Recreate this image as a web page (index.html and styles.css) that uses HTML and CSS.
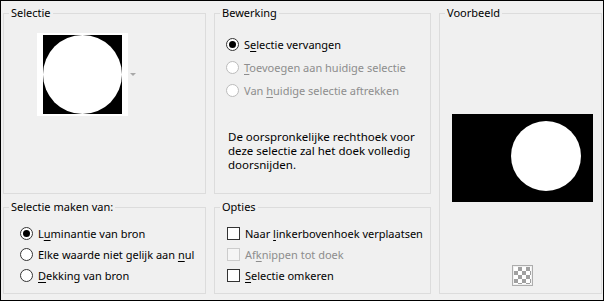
FILE: index.html
```html
<!DOCTYPE html>
<html>
<head>
    <link rel="stylesheet" href="styles.css">
</head>
<body>
    <div class="dialog">
        <!-- Source thumbnail -->
        <fieldset class="group selection">
            <legend>Selectie</legend>
            <div class="thumb-row">
                <div class="thumb">
                    <div class="thumb-img"><div class="disc"></div></div>
                </div>
                <span class="drop-arrow"></span>
            </div>
        </fieldset>

        <!-- Operation -->
        <fieldset class="group operation">
            <legend>Bewerking</legend>
            <div class="option-list">
                <label class="option"><span class="radio checked"></span><span>S<u>e</u>lectie vervangen</span></label>
                <label class="option disabled"><span class="radio"></span><span><u>T</u>oevoegen aan huidige selectie</span></label>
                <label class="option disabled"><span class="radio"></span><span>Van <u>h</u>uidige selectie aftrekken</span></label>
            </div>
            <p class="note">De oorspronkelijke rechthoek voor<br>deze selectie zal het doek volledig<br>doorsnijden.</p>
        </fieldset>

        <!-- Preview -->
        <fieldset class="group preview">
            <legend>Voorbeeld</legend>
            <div class="preview-img"><div class="preview-disc"></div></div>
            <div class="checker"><div class="checker-inner"></div></div>
        </fieldset>

        <!-- Source channel -->
        <fieldset class="group source">
            <legend>Selectie maken van:</legend>
            <div class="option-list tight">
                <label class="option"><span class="radio checked"></span><span>L<u>u</u>minantie van bron</span></label>
                <label class="option"><span class="radio"></span><span>Elke waarde niet gelijk aan <u>n</u>ul</span></label>
                <label class="option"><span class="radio"></span><span><u>D</u>ekking van bron</span></label>
            </div>
        </fieldset>

        <!-- Options -->
        <fieldset class="group options">
            <legend>Opties</legend>
            <div class="option-list tight">
                <label class="option"><span class="check"></span><span>Naar <u>l</u>inkerbovenhoek verplaatsen</span></label>
                <label class="option disabled"><span class="check"></span><span>Af<u>k</u>nippen tot doek</span></label>
                <label class="option"><span class="check"></span><span><u>S</u>electie omkeren</span></label>
            </div>
        </fieldset>
    </div>
</body>
</html>
```

FILE: styles.css
```css
/* Dialog frame */
body {
    margin: 0;
    font-family: "Noto Sans", sans-serif;
    font-size: 11px;
    color: #000;
    background: #f0f0f0;
}
.dialog {
    box-sizing: border-box;
    width: 604px;
    height: 301px;
    border: 1px solid #000;
    background: #f0f0f0;
    padding: 4px 1px 6px 2px;
    display: grid;
    grid-template-columns: 203px 217px 163px;
    grid-template-rows: 189px 95px;
    column-gap: 8px;
    row-gap: 5px;
}
.group {
    margin: 0;
    padding: 0;
    min-width: 0;
    border: 1px solid #dcdcdc;
}
.group legend {
    margin-left: 5px;
    padding: 0 2px;
    line-height: 16px;
}
.preview {
    grid-column: 3;
    grid-row: 1 / span 2;
}
.source {
    grid-column: 1;
    grid-row: 2;
}
.options {
    grid-column: 2;
    grid-row: 2;
}

/* Selectie thumbnail */
.thumb-row {
    display: flex;
    align-items: center;
    margin: 12px 0 0 33px;
}
.thumb {
    background: #fff;
    padding: 2px 6px;
}
.thumb-img {
    width: 79px;
    height: 79px;
    background: #000;
}
.disc {
    width: 79px;
    height: 79px;
    border-radius: 50%;
    background: #fff;
}
.drop-arrow {
    width: 0;
    height: 0;
    margin-left: 2px;
    border-left: 3px solid transparent;
    border-right: 3px solid transparent;
    border-top: 3px solid #a8a8a8;
}

/* Radio and checkbox rows */
.option-list {
    display: flex;
    flex-direction: column;
    gap: 1px;
    padding: 12px 0 0 11px;
}
.option-list.tight {
    gap: 0;
    padding: 8px 0 0 16px;
}
.options .option-list.tight {
    padding-left: 12px;
}
.option {
    display: flex;
    align-items: center;
    gap: 5px;
    height: 22px;
    white-space: nowrap;
}
.tight .option {
    height: 21px;
}
.option.disabled {
    color: #8d8d8d;
}
.option u {
    text-underline-offset: 2px;
}
.radio {
    box-sizing: border-box;
    width: 13px;
    height: 13px;
    border: 1px solid #333;
    border-radius: 50%;
    background: #fff;
    display: flex;
    align-items: center;
    justify-content: center;
    flex: none;
}
.radio.checked::after {
    content: "";
    width: 7px;
    height: 7px;
    border-radius: 50%;
    background: #000;
}
.disabled .radio {
    border-color: #bcbcbc;
}
.check {
    box-sizing: border-box;
    width: 13px;
    height: 13px;
    border: 1px solid #333;
    background: #fff;
    flex: none;
}
.disabled .check {
    border-color: #cccccc;
    background: #f5f5f5;
}
.note {
    margin: 29px 0 0 13px;
    font-size: 11.5px;
    line-height: 14px;
}

/* Voorbeeld */
.preview-img {
    width: 141px;
    height: 88px;
    margin: 93px 0 0 12px;
    background: #000;
    box-sizing: border-box;
    padding: 7px 0 0 59px;
}
.preview-disc {
    width: 70px;
    height: 70px;
    border-radius: 50%;
    background: #fff;
}
.checker {
    width: 21px;
    height: 21px;
    box-sizing: border-box;
    margin: 63px 0 0 72px;
    border: 1px solid #adadad;
    padding: 1px;
}
.checker-inner {
    width: 17px;
    height: 17px;
    background-color: #fff;
    background-image:
        linear-gradient(45deg, #a0a0a0 25%, transparent 25%, transparent 75%, #a0a0a0 75%),
        linear-gradient(45deg, #a0a0a0 25%, transparent 25%, transparent 75%, #a0a0a0 75%);
    background-size: 8px 8px;
    background-position: 0 0, 4px 4px;
}
```
